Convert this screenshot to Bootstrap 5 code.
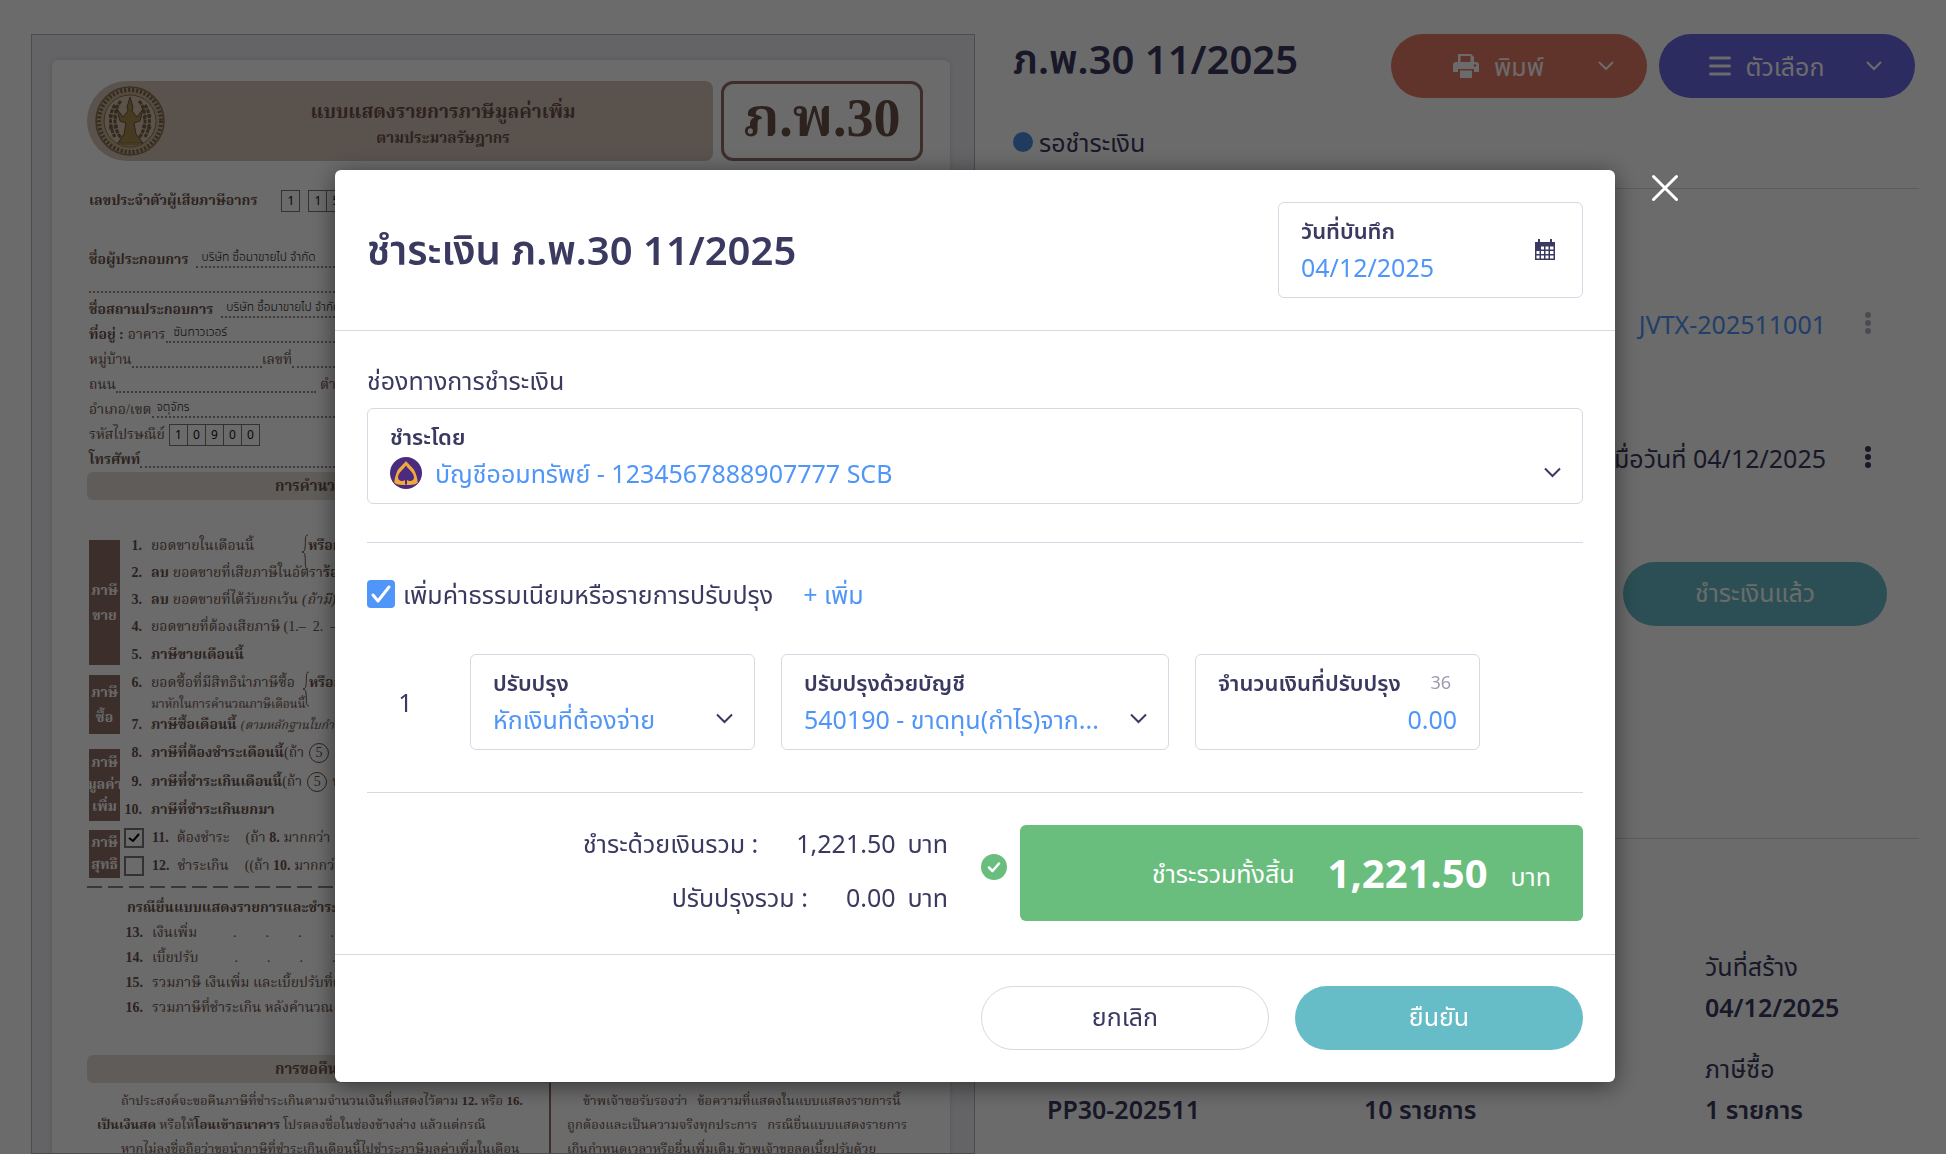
<!DOCTYPE html>
<html lang="th">
<head>
<meta charset="utf-8">
<meta name="viewport" content="width=device-width, initial-scale=1">
<title>ชำระเงิน ภ.พ.30 11/2025</title>
<link rel="stylesheet" href="https://cdn.jsdelivr.net/npm/bootstrap@5.3.0/dist/css/bootstrap.min.css">
<style>
:root{--ink:#3a3960;--azure:#5096f8;--rule:#d8d8e4;--brown:#6b5149;--bark:#8f7066}
body{font-family:"Noto Sans","Noto Sans Thai",sans-serif;font-weight:400;font-size:25px;line-height:36px;color:var(--ink);background:#fff;overflow:hidden}
button,input,select{font-family:inherit;font-weight:inherit;line-height:inherit}
a{color:var(--azure);text-decoration:none}
a:hover{color:var(--azure)}
.fw-semi{font-weight:600}
.page-title{font-size:40px;line-height:50px;font-weight:600;margin:0}
.divider{border:0;border-top:1px solid var(--rule);opacity:1;margin:0}
.workspace{height:100vh;overflow:hidden}

/* form preview */
.preview{flex:0 0 944px;min-width:0;margin:34px 0 0 31px;padding:25px 24px 0 20px;background:#eeeef5;border:1px solid #b4b4be;overflow:hidden}
.sheet{min-height:100%;background:#fff;border-radius:6px;padding:21px 27px 0 35px;box-shadow:0 0 4px rgba(0,0,0,.15);color:var(--brown);font-family:"Liberation Serif","Noto Serif Thai",serif;font-size:14px;line-height:24px;font-weight:400;white-space:nowrap}
.sheet b{font-weight:700}
.band-top{flex:1;height:80px;background:#d6c3b8;border-radius:40px 8px 8px 40px;padding:4px 0 0 8px;display:flex}
.band-title{flex:1;text-align:center;font-weight:700;font-size:15px;line-height:26px;padding:14px 0 0 8px}
.band-title div:first-child{font-size:19px}
.code-frame{width:202px;height:80px;border:3px solid var(--bark);border-radius:12px;font-size:54px;line-height:68px;font-weight:700;text-align:center}
.rowline{display:flex;align-items:center;height:25px;padding-left:2px}
.row-tax{margin-top:27px}
.row-name{margin-top:34px}
.fill{flex:1;min-width:0;border-bottom:2px dotted #9a8a84;height:17px;color:#111;font-family:"Noto Sans","Noto Sans Thai",sans-serif;font-size:12px;font-weight:300;line-height:12px;padding-left:5px}
.fill-short{max-width:130px}
.fill-mid{max-width:200px}
.cells{display:flex;border:1px solid #777;height:22px}
.cells span{width:17px;text-align:center;font-family:"Noto Sans",sans-serif;font-size:12px;line-height:20px;color:#111}
.cells span+span{border-left:1px solid #777;width:18px}
.band{height:28px;border-radius:6px;background:#e3dcd5;line-height:28px;padding-left:188px;font-weight:700;font-size:15px}
.band-gap{margin-top:35px}
.tags{padding:8px 0 0 2px}
.tag{background:var(--bark);color:#fff;width:31px;display:flex;align-items:center;justify-content:center;text-align:center;font-weight:700;line-height:25px;font-size:14px}
.tag-tight{line-height:22px}
.num{width:22px;text-align:right;font-weight:700;margin-right:9px;flex:none}
.ln{display:flex;align-items:center;height:27px}
.ln-tall{height:29px}
.ln-note{height:15px;padding-left:31px}
.fine{font-size:12px}
.ring{border:1px solid var(--brown);border-radius:50%;width:20px;height:20px;line-height:18px;text-align:center;margin:0 5px}
.brace{width:6px;height:36px;margin-top:12px;flex:none}
.leader{display:flex;gap:29px;margin-left:auto;width:80px}
.leader-wide{margin-left:0;width:auto;flex:1;padding-left:36px}
.dash{height:2px;margin-top:7px;background:repeating-linear-gradient(90deg,#8c8480 0 15px,transparent 15px 21px)}
.para{font-size:13px;padding-top:6px;line-height:24px}
.para-left{width:464px;border-right:2px solid var(--bark);padding-left:10px}

/* document details */
.details{flex:1;min-width:0;padding:34px 27px 0 38px}
.pill{height:64px;border:0;border-radius:32px;color:#fff;font-size:25px;padding-bottom:6px}
.pill-menu{width:256px;display:flex;align-items:center;padding:0 33px 0 8px}
.pill-menu>span{flex:1;display:flex;align-items:center;justify-content:center;gap:15px}
.pill-orange{background:#e57c66}
.pill-violet{background:#6b69e5}
.pill-teal{background:#66bdc8}
.status-dot{width:20px;height:20px;border-radius:50%;background:#4a90e2;margin-right:6px}
.doc-line{display:flex;justify-content:flex-end;align-items:center;gap:32px;padding-right:41px}
.kebab{border:0;background:none;padding:0;width:20px;line-height:0;text-align:center}
.facts{display:grid;grid-template-columns:317px 341px 1fr;padding-left:34px;row-gap:5px}

/* payment dialog */
.modal{overflow:hidden}
.modal-backdrop.show{opacity:.58}
.modal-dialog{max-width:1280px;margin:170px auto 0}
.modal-content{border:0;border-radius:6px;box-shadow:0 4px 24px rgba(0,0,0,.5);color:var(--ink)}
.modal-header{padding:32px;border-color:var(--rule)}
.modal-body{padding:31px 32px 33px}
.modal-footer{padding:31px 32px 32px;gap:26px;border-color:var(--rule)}
.modal-footer>*{margin:0;width:288px}
.pill-line{background:#fff;border:1px solid var(--rule);color:var(--ink)}
.close-x{position:absolute;right:-65px;top:3px;border:0;background:none;padding:0;width:30px;height:30px;line-height:0}
.field{border:1px solid var(--rule);border-radius:6px;height:96px;padding:9px 22px 0;position:relative}
.field label{display:block;font-weight:600;font-size:22px;line-height:36px}
.field input,.field select{appearance:none;border:0;background:none;padding:0;color:var(--azure);font-size:25px;height:38px;width:100%;min-width:0;outline:0;display:block}
.field-icon{position:absolute;right:21px;top:58px;line-height:0;pointer-events:none}
.field-icon-mid{right:27px;top:36px}
.field-date{width:305px}
.field-s{flex:0 0 285px}
.field-m{flex:0 0 388px}
.count{font-size:18px;color:#9c9cb2;padding-right:6px}
.row-no{width:77px;text-align:center;align-self:center}
.tickbox{appearance:none;width:28px;height:28px;border-radius:4px;background:var(--azure) url("data:image/svg+xml,%3Csvg xmlns='http://www.w3.org/2000/svg' viewBox='0 0 28 28'%3E%3Cpath d='M6 15l5 6L22 7' fill='none' stroke='white' stroke-width='3' stroke-linecap='round' stroke-linejoin='round'/%3E%3C/svg%3E");flex:none;margin:0}
.sum-line{display:flex;justify-content:flex-end;gap:12px}
.sum-line span:nth-child(2){margin-left:26px}
.paid-mark{margin:29px 13px 0 33px;line-height:0}
.total{background:#69bd7d;color:#fff;border-radius:6px;width:563px;height:96px;padding-right:32px}
.grand{font-size:40px;font-weight:700;margin:0 23px 0 33px}
.unit{padding-top:6px}
</style>
<script src="https://cdn.jsdelivr.net/npm/bootstrap@5.3.0/dist/js/bootstrap.bundle.min.js"></script>
</head>
<body>
<main class="workspace d-flex">
<section class="preview">
 <div class="sheet">
  <div class="d-flex gap-2">
   <div class="band-top">
    <svg width="70" height="72" viewBox="0 0 70 72" fill="none"><circle cx="35" cy="36" r="34" fill="#c9b294" stroke="#8d7450" stroke-width="1.500"/><circle cx="35" cy="36" r="31" stroke="#7a6248" stroke-width="4" stroke-dasharray="2 2"/><circle cx="35" cy="36" r="26" fill="#d8c6ae" stroke="#8d7450"/><g stroke="#7a6248" stroke-width="3" stroke-dasharray="4 1"><path d="M20 20c-6 8-6 22 0 32M26 16c-8 8-9 29 2 39M50 20c6 8 6 22 0 32M44 16c8 8 9 29-2 39M14 30l8 3M14 43l9-2M56 30l-8 3M56 43l-9-2"/></g><path d="M35 12l3 10-1 4 5 6 6-8-3 12-6 2 2 11 7 9H23l6-9 2-11-6-2-3-12 6 8 5-6-1-4z" fill="#a88a50" stroke="#6e5540"/><path d="M26 59h18" stroke="#a88a50" stroke-width="3"/></svg>
    <div class="band-title"><div>แบบแสดงรายการภาษีมูลค่าเพิ่ม</div><div>ตามประมวลรัษฎากร</div></div>
   </div>
   <div class="code-frame">ภ.พ.30</div>
  </div>
  <div class="rowline row-tax"><b>เลขประจำตัวผู้เสียภาษีอากร</b><div class="cells ms-4"><span>1</span></div><div class="cells ms-2"><span>1</span><span>5</span><span>5</span></div></div>
  <div class="rowline row-name"><b>ชื่อผู้ประกอบการ</b><span class="fill ms-2">บริษัท ซื้อมาขายไป จำกัด</span></div>
  <div class="rowline"><span class="fill"></span></div>
  <div class="rowline"><b>ชื่อสถานประกอบการ</b><span class="fill ms-2">บริษัท ซื้อมาขายไป จำกัด</span></div>
  <div class="rowline"><b class="me-1">ที่อยู่ :</b>อาคาร<span class="fill ps-2">ซันทาวเวอร์</span></div>
  <div class="rowline">หมู่บ้าน<span class="fill fill-short"></span>เลขที่<span class="fill"></span></div>
  <div class="rowline">ถนน<span class="fill fill-mid me-1"></span>ตำบล/แขวง<span class="fill"></span></div>
  <div class="rowline">อำเภอ/เขต<span class="fill">จตุจักร</span></div>
  <div class="rowline">รหัสไปรษณีย์<div class="cells ms-1"><span>1</span><span>0</span><span>9</span><span>0</span><span>0</span></div></div>
  <div class="rowline"><b>โทรศัพท์</b><span class="fill"></span></div>
  <div class="band">การคำนวณภาษี</div>
  <div class="d-flex mt-4 pt-2">
   <div class="tags">
    <div class="tag" style="height:125px">ภาษี<br>ขาย</div>
    <div class="tag" style="height:59px;margin-top:10px">ภาษี<br>ซื้อ</div>
    <div class="tag tag-tight" style="height:72px;margin-top:15px">ภาษี<br>มูลค่า<br>เพิ่ม</div>
    <div class="tag tag-tight" style="height:48px;margin-top:9px">ภาษี<br>สุทธิ</div>
   </div>
   <div>
    <div class="ln"><span class="num">1.</span>ยอดขายในเดือนนี้<svg class="brace ms-5" viewBox="0 0 6 36" fill="none" stroke="#6b5149"><path d="M6 1C2 1 4 8 3 14c0 2-1 4-3 4 2 0 3 2 3 4 1 6-1 13 3 13"/></svg><b>หรือกรณียื่นเพิ่มเติม</b></div>
    <div class="ln"><span class="num">2.</span><b class="me-1">ลบ</b>ยอดขายที่เสียภาษีในอัตรา<b>ร้อยละ 0</b></div>
    <div class="ln"><span class="num">3.</span><b class="me-1">ลบ</b>ยอดขายที่ได้รับยกเว้น<i class="ms-1">(ถ้ามี)</i></div>
    <div class="ln"><span class="num">4.</span>ยอดขายที่ต้องเสียภาษี (1.– &nbsp;2. &nbsp;– 3.)</div>
    <div class="ln ln-tall"><span class="num">5.</span><b>ภาษีขายเดือนนี้</b><span class="leader"><span>.</span><span>.</span></span></div>
    <div class="ln"><span class="num">6.</span>ยอดซื้อที่มีสิทธินำภาษีซื้อ<svg class="brace ms-2" viewBox="0 0 6 36" fill="none" stroke="#6b5149"><path d="M6 1C2 1 4 8 3 14c0 2-1 4-3 4 2 0 3 2 3 4 1 6-1 13 3 13"/></svg><b>หรือกรณี</b></div>
    <div class="ln ln-note fine">มาหักในการคำนวณภาษีเดือนนี้</div>
    <div class="ln"><span class="num">7.</span><b>ภาษีซื้อเดือนนี้</b><i class="ms-1 fine">(ตามหลักฐานใบกำกับภาษี)</i></div>
    <div class="ln ln-tall"><span class="num">8.</span><b>ภาษีที่ต้องชำระเดือนนี้</b>(ถ้า<span class="ring">5</span>มากกว่า</div>
    <div class="ln ln-tall"><span class="num">9.</span><b>ภาษีที่ชำระเกินเดือนนี้</b>(ถ้า<span class="ring">5</span>น้อยกว่า</div>
    <div class="ln"><span class="num">10.</span><b>ภาษีที่ชำระเกินยกมา</b><span class="leader"><span>.</span><span>.</span></span></div>
    <div class="ln ln-tall"><svg class="ms-1 me-2" width="20" height="20" viewBox="0 0 20 20" fill="none" stroke="#777" stroke-width="2"><path d="M1 1h18v18H1z"/><path d="M5 10l4 3 6-7" stroke="#000"/></svg><b class="me-2">11.</b>ต้องชำระ<span class="ms-3">(ถ้า <b>8.</b> มากกว่า <b>10.</b>)</span></div>
    <div class="ln"><svg class="ms-1 me-2" width="20" height="20" viewBox="0 0 20 20" fill="none" stroke="#777" stroke-width="2"><path d="M1 1h18v18H1z"/></svg><b class="me-2">12.</b>ชำระเกิน<span class="ms-3">((ถ้า <b>10.</b> มากกว่า <b>8.</b>)</span></div>
   </div>
  </div>
  <div class="dash"></div>
  <div class="pt-2 ps-4">
   <div class="ps-3"><b>กรณียื่นแบบแสดงรายการและชำระภาษีเกินกำหนดเวลา</b></div>
   <div class="rowline"><span class="num ms-2">13.</span>เงินเพิ่ม<span class="leader leader-wide"><span>.</span><span>.</span><span>.</span><span>.</span></span></div>
   <div class="rowline"><span class="num ms-2">14.</span>เบี้ยปรับ<span class="leader leader-wide"><span>.</span><span>.</span><span>.</span><span>.</span></span></div>
   <div class="rowline"><span class="num ms-2">15.</span>รวมภาษี เงินเพิ่ม และเบี้ยปรับที่ต้องชำระ</div>
   <div class="rowline"><span class="num ms-2">16.</span>รวมภาษีที่ชำระเกิน หลังคำนวณเงินเพิ่ม</div>
  </div>
  <div class="band band-gap">การขอคืนภาษี</div>
  <div class="d-flex">
   <div class="para para-left"><div class="ps-4">ถ้าประสงค์จะขอคืนภาษีที่ชำระเกินตามจำนวนเงินที่แสดงไว้ตาม <b>12.</b> หรือ <b>16.</b></div><div><b>เป็นเงินสด</b> หรือให้<b>โอนเข้าธนาคาร</b> โปรดลงชื่อในช่องข้างล่าง แล้วแต่กรณี</div><div class="ps-4">หากไม่ลงชื่อถือว่าขอนำภาษีที่ชำระเกินเดือนนี้ไปชำระภาษีมูลค่าเพิ่มในเดือน</div></div>
   <div class="para ps-3"><div class="ps-3">ข้าพเจ้าขอรับรองว่า &nbsp; ข้อความที่แสดงในแบบแสดงรายการนี้</div><div>ถูกต้องและเป็นความจริงทุกประการ &nbsp; กรณียื่นแบบแสดงรายการ</div><div>เกินกำหนดเวลาหรือยื่นเพิ่มเติม ข้าพเจ้าขอลดเบี้ยปรับด้วย</div></div>
  </div>
 </div>
</section>
<section class="details">
 <div class="d-flex align-items-start pe-1">
  <h1 class="page-title me-auto">ภ.พ.30 11/2025</h1>
  <div class="d-flex" style="gap:12px">
   <button class="pill pill-menu pill-orange" type="button"><span><svg width="26" height="26" viewBox="0 0 26 26"><path d="M6 1h12l3 3v6H5V1z" fill="#fff"/><path d="M7.500 3h10v6h-10z" fill="#e57c66"/><path d="M3 9h20a3 3 0 013 3v7h-5v-3H5v3H0v-7a3 3 0 013-3z" fill="#fff"/><path d="M7 17.500h12V25H7z" fill="#fff"/><circle cx="22" cy="12.500" r="1.300" fill="#e57c66"/></svg>พิมพ์</span><svg width="16" height="10" viewBox="0 0 16 10" fill="none" stroke="#fff" stroke-width="2"><path d="M1 1l7 7 7-7"/></svg></button>
   <button class="pill pill-menu pill-violet" type="button"><span><svg width="22" height="20" viewBox="0 0 22 20" stroke="#fff" stroke-width="3" stroke-linecap="round"><path d="M1.500 2h19M1.500 10h19M1.500 18h19"/></svg>ตัวเลือก</span><svg width="16" height="10" viewBox="0 0 16 10" fill="none" stroke="#fff" stroke-width="2"><path d="M1 1l7 7 7-7"/></svg></button>
  </div>
 </div>
 <div class="d-flex align-items-center" style="margin:26px 0 28px"><span class="status-dot"></span>รอชำระเงิน</div>
 <hr class="divider">
 <div class="doc-line" style="margin-top:117px"><a href="#">JVTX-202511001</a><button class="kebab" type="button" aria-label="เมนูเอกสาร"><svg width="8" height="26" viewBox="0 0 8 26" fill="#b4b4c4"><circle cx="4" cy="4" r="3"/><circle cx="4" cy="12" r="3"/><circle cx="4" cy="20" r="3"/></svg></button></div>
 <div class="doc-line" style="margin-top:98px"><span>เมื่อวันที่ 04/12/2025</span><button class="kebab" type="button" aria-label="เมนูการชำระ"><svg width="8" height="26" viewBox="0 0 8 26" fill="#3a3960"><circle cx="4" cy="4" r="3"/><circle cx="4" cy="12" r="3"/><circle cx="4" cy="20" r="3"/></svg></button></div>
 <div class="d-flex justify-content-end" style="margin:86px 32px 0 0"><button class="pill pill-teal" style="width:264px" type="button">ชำระเงินแล้ว</button></div>
 <hr class="divider" style="margin-top:212px">
 <div class="facts" style="margin-top:109px"><div></div><div></div><div>วันที่สร้าง</div><div></div><div></div><div class="fw-semi">04/12/2025</div></div>
 <div class="facts" style="margin-top:25px"><div></div><div></div><div>ภาษีซื้อ</div><div class="fw-semi">PP30-202511</div><div class="fw-semi">10 รายการ</div><div class="fw-semi">1 รายการ</div></div>
</section>
</main>

<div class="modal-backdrop show"></div>
<div class="modal d-block ps-1" tabindex="-1" role="dialog" aria-modal="true" aria-labelledby="payTitle">
 <div class="modal-dialog"><div class="modal-content">
  <button class="close-x" type="button" aria-label="ปิด"><svg width="30" height="30" viewBox="0 0 30 30" stroke="#fff" stroke-width="3" stroke-linecap="round"><path d="M3.500 3.500l23 23M26.500 3.500l-23 23"/></svg></button>
  <div class="modal-header">
   <h2 class="page-title" id="payTitle">ชำระเงิน ภ.พ.30 11/2025</h2>
   <div class="field field-date"><label for="payDate">วันที่บันทึก</label><input id="payDate" type="text" value="04/12/2025">
    <span class="field-icon field-icon-mid"><svg width="20" height="22" viewBox="0 0 20 22"><path d="M0 3h20v18H0z" fill="#3a3960"/><path d="M4 0v3M16 0v3" stroke="#3a3960" stroke-width="2"/><path d="M6 7.500h3v3H6zM10.500 7.500h3v3h-3zM15 7.500h3.500v3H15zM1.500 12h3v3h-3zM6 12h3v3H6zM10.500 12h3v3h-3zM15 12h3.500v3H15zM1.500 16.500h3v3h-3zM6 16.500h3v3H6zM10.500 16.500h3v3h-3zM15 16.500h3.500v3H15z" fill="#fff"/></svg></span>
   </div>
  </div>
  <div class="modal-body">
   <div style="margin-bottom:10px">ช่องทางการชำระเงิน</div>
   <div class="field"><label for="payBy">ชำระโดย</label>
    <div class="d-flex align-items-center" style="gap:13px"><svg class="flex-shrink-0" width="32" height="32" viewBox="0 0 32 32"><circle cx="16" cy="16" r="16" fill="#4b2b7f"/><path d="M16 4C19 8 24 11 25.500 16 27 20 28 24 27.500 26c-3 2-7 2-11 2h-1c-4 0-8 0-11-2C4 24 5 20 6.500 16 8 11 13 8 16 4z" fill="#f0a93a"/><path d="M16 8.500c2 3.500 8 7 8 12 0 3.500-4.500 4.500-7 2.500v4.500h-2V23c-2.500 2-7 1-7-2.500 0-5 6-8.500 8-12z" fill="#4b2b7f"/></svg>
    <select id="payBy"><option>บัญชีออมทรัพย์ - 1234567888907777 SCB</option></select></div>
    <span class="field-icon"><svg width="17" height="11" viewBox="0 0 17 11" fill="none" stroke="#3a3960" stroke-width="2"><path d="M1 1.500l7.500 7.500L16 1.500"/></svg></span>
   </div>
   <hr class="divider" style="margin:38px 0 33px">
   <div class="d-flex align-items-center"><input class="tickbox" id="adj" type="checkbox" checked><label for="adj" style="margin:0 30px 0 8px">เพิ่มค่าธรรมเนียมหรือรายการปรับปรุง</label><a href="#">+ เพิ่ม</a></div>
   <div class="d-flex" style="gap:26px;margin:42px 0 42px">
    <div class="row-no">1</div>
    <div class="field field-s"><label for="kind">ปรับปรุง</label><select id="kind"><option>หักเงินที่ต้องจ่าย</option></select><span class="field-icon"><svg width="17" height="11" viewBox="0 0 17 11" fill="none" stroke="#3a3960" stroke-width="2"><path d="M1 1.500l7.500 7.500L16 1.500"/></svg></span></div>
    <div class="field field-m"><label for="acct">ปรับปรุงด้วยบัญชี</label><select id="acct"><option>540190 - ขาดทุน(กำไร)จาก...</option></select><span class="field-icon"><svg width="17" height="11" viewBox="0 0 17 11" fill="none" stroke="#3a3960" stroke-width="2"><path d="M1 1.500l7.500 7.500L16 1.500"/></svg></span></div>
    <div class="field field-s"><div class="d-flex justify-content-between"><label for="amt">จำนวนเงินที่ปรับปรุง</label><span class="count">36</span></div><input class="text-end" id="amt" type="text" value="0.00"></div>
   </div>
   <hr class="divider">
   <div class="d-flex justify-content-end" style="margin-top:32px">
    <div class="d-flex flex-column" style="gap:18px">
     <div class="sum-line"><span>ชำระด้วยเงินรวม :</span><span>1,221.50</span><span>บาท</span></div>
     <div class="sum-line"><span>ปรับปรุงรวม :</span><span>0.00</span><span>บาท</span></div>
    </div>
    <div class="paid-mark"><svg width="26" height="26" viewBox="0 0 26 26"><circle cx="13" cy="13" r="13" fill="#69bd7d"/><path d="M8 13.500l3.500 3.500L18 9.500" fill="none" stroke="#fff" stroke-width="2.500" stroke-linecap="round" stroke-linejoin="round"/></svg></div>
    <div class="total d-flex align-items-center justify-content-end"><span>ชำระรวมทั้งสิ้น</span><span class="grand">1,221.50</span><span class="unit">บาท</span></div>
   </div>
  </div>
  <div class="modal-footer"><button class="pill pill-line" type="button">ยกเลิก</button><button class="pill pill-teal" type="button">ยืนยัน</button></div>
 </div></div>
</div>
</body>
</html>
